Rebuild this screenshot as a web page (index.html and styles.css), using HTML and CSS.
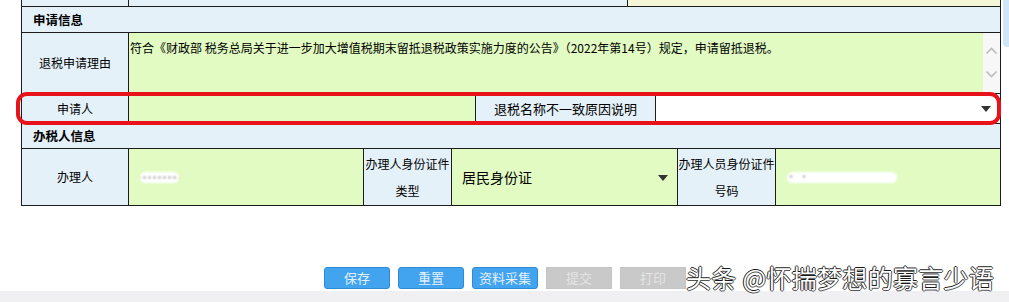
FILE: index.html
```html
<!DOCTYPE html>
<html lang="zh-CN">
<head>
<meta charset="utf-8">
<title>申请信息</title>
<link rel="stylesheet" href="styles.css">
</head>
<body>
<div class="page">
  <div class="form">
    <div class="cell lab"></div>
    <div class="cell lab c2-5"></div>
    <div class="cell pale c6-9"></div>

    <div class="cell head c-all">申请信息</div>

    <div class="cell lab">退税申请理由</div>
    <div class="cell reason c2-9">
      <div class="reason-text">符合《财政部 税务总局关于进一步加大增值税期末留抵退税政策实施力度的公告》（2022年第14号）规定，申请留抵退税。</div>
      <div class="scroll">
        <svg width="17" height="60" viewBox="0 0 17 60">
          <path d="M3.5 20.5 L8.5 15.5 L13.5 20.5" fill="none" stroke="#bcbcbc" stroke-width="1.6"/>
          <path d="M3.5 38.5 L8.5 43.5 L13.5 38.5" fill="none" stroke="#bcbcbc" stroke-width="1.6"/>
        </svg>
      </div>
    </div>

    <div class="cell lab">申请人</div>
    <div class="cell green c2-4"></div>
    <div class="cell lab c5-6 lab13">退税名称不一致原因说明</div>
    <div class="cell select white c7-9"><span></span><span class="caret"></span></div>

    <div class="cell head c-all">办税人信息</div>

    <div class="cell lab">办理人</div>
    <div class="cell green field"><span class="blob blob-name"></span></div>
    <div class="cell lab two">办理人身份证件<br>类型</div>
    <div class="cell select green c4-7"><span class="sel-text">居民身份证</span><span class="caret"></span></div>
    <div class="cell lab two">办理人员身份证件<br>号码</div>
    <div class="cell green field"><span class="blob blob-id"></span></div>
  </div>

  <div class="actions">
    <button class="btn primary">保存</button>
    <button class="btn primary">重置</button>
    <button class="btn primary">资料采集</button>
    <button class="btn off">提交</button>
    <button class="btn off">打印</button>
  </div>
  <div class="footer"></div>

  <div class="ring"></div>
  <div class="mark">头条 @怀揣梦想的寡言少语</div>
  <div class="edge"></div>
</div>
</body>
</html>
```
FILE: styles.css
```css
html, body {
  margin: 0;
  padding: 0;
  background: #ffffff;
}

body {
  font-family: "Noto Sans CJK SC", "Noto Sans", sans-serif;
  color: #000;
  font-size: 12px;
}

.page {
  position: relative;
  width: 1009px;
  height: 302px;
  overflow: hidden;
}

.form {
  margin-left: 21px;
  width: fit-content;
  display: grid;
  grid-template-columns: 106px 234px 87px 23px 151px 27px 21px 97px 224px;
  grid-template-rows: 6px 25px 60px 29px 24px 56px;
  gap: 1px;
  padding: 0 1px 1px 1px;
  background: #1c1c1c;
}

.cell {
  display: flex;
  align-items: center;
  justify-content: center;
  min-width: 0;
  overflow: hidden;
  font-size: 12px;
  line-height: 16px;
}

.lab { background: #e5f1f9; }
.lab13 { font-size: 13px; }
.pale { background: #f3f7d7; }
.green { background: #e1fbc2; }
.white { background: #ffffff; }

.c2-5 { grid-column: 2 / 6; }
.c6-9 { grid-column: 6 / 10; }
.c2-9 { grid-column: 2 / 10; }
.c2-4 { grid-column: 2 / 5; }
.c5-6 { grid-column: 5 / 7; }
.c7-9 { grid-column: 7 / 10; }
.c4-7 { grid-column: 4 / 8; }
.c-all { grid-column: 1 / 10; }

.head {
  background: #e5f1f9;
  justify-content: flex-start;
  padding-left: 11px;
  font-weight: bold;
  font-size: 12.5px;
}

.reason {
  align-items: stretch;
  justify-content: flex-start;
}

.reason-text {
  flex: 1;
  background: #e1fbc2;
  padding: 7px 0 0 1px;
  font-size: 12px;
  line-height: 16px;
  white-space: nowrap;
}

.scroll {
  width: 17px;
  background: #f7f7f7;
}

.scroll svg { display: block; }

.two {
  line-height: 27px;
  text-align: center;
  white-space: nowrap;
}

.select {
  justify-content: space-between;
  padding: 0 9px 0 10px;
}

.sel-text {
  font-size: 14px;
  line-height: 18px;
}

.caret {
  width: 0;
  height: 0;
  border-left: 5px solid transparent;
  border-right: 5px solid transparent;
  border-top: 6px solid #333;
  margin-top: 1px;
}

.field {
  justify-content: flex-start;
  padding-left: 11px;
}

.blob {
  display: inline-block;
  height: 11px;
  border-radius: 6px;
  background: #ffffff;
  filter: blur(1px);
}

.blob-name {
  width: 39px;
  background:
    radial-gradient(circle, #555 0.7px, transparent 1.2px) 2px 0 / 5px 11px repeat-x,
    #ffffff;
}

.blob-id {
  width: 110px;
  background:
    radial-gradient(circle, #666 0.7px, transparent 1.2px) 1px -1px / 6px 11px no-repeat,
    radial-gradient(circle, #666 0.7px, transparent 1.2px) 14px -1px / 6px 11px no-repeat,
    #ffffff;
}

.actions {
  margin-top: 61px;
  padding-left: 324px;
  display: flex;
  gap: 8px;
  height: 22px;
}

.btn {
  width: 66px;
  height: 22px;
  box-sizing: border-box;
  padding: 0;
  border-radius: 3px;
  font-family: "Noto Sans CJK SC", sans-serif;
  font-size: 13px;
  line-height: 20px;
}

.primary {
  background: #42a3ee;
  border: 1px solid #2f8ad4;
  color: #e2f1ff;
}

.off {
  background: #c9c9c9;
  border: 1px solid #c4c4c4;
  color: #e4e4e4;
  border-radius: 0;
}

.footer {
  margin-top: 2px;
  height: 11px;
  background: #f0f0f2;
}

.ring {
  position: absolute;
  left: 16px;
  top: 92px;
  width: 977px;
  height: 25px;
  border: 4px solid #e8121a;
  border-radius: 11px;
}

.mark {
  position: absolute;
  left: 686px;
  top: 264px;
  font-size: 25px;
  line-height: 26px;
  color: #ffffff;
  white-space: nowrap;
  letter-spacing: 0.3px;
  text-shadow:
    -1px 0 0 #1a1a1a,
    0 -1px 0 #1a1a1a,
    1px 0 0 #555,
    0 1px 0 #555;
}

.edge {
  position: absolute;
  left: 1003px;
  top: 0;
  width: 6px;
  height: 47px;
  background: #cfe6f8;
  border-bottom-left-radius: 4px;
}
```
